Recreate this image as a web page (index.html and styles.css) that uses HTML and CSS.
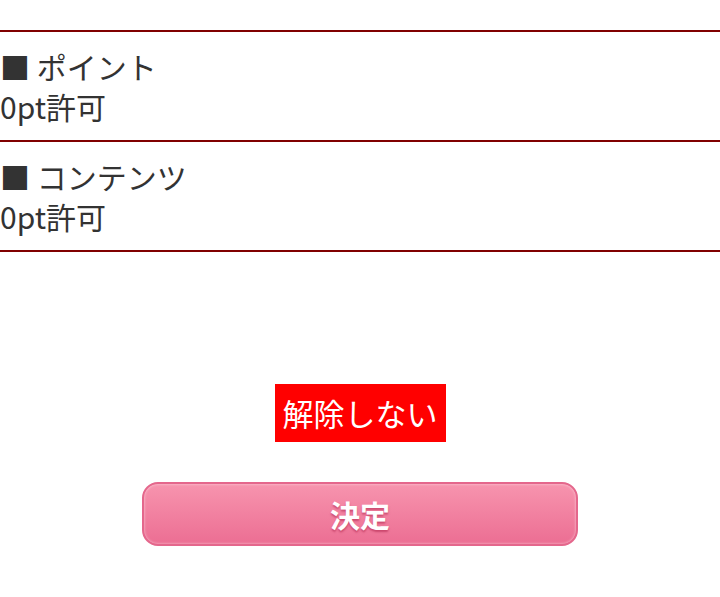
FILE: index.html
```html
<!DOCTYPE html>
<html lang="ja">
<head>
    <meta charset="UTF-8">
    <meta name="viewport" content="width=device-width, initial-scale=1.0">
    <title>設定</title>
    <link rel="stylesheet" href="styles.css">
</head>
<body>
    <div class="settings">
        <div class="setting-row">
            <div class="setting-title">■ ポイント</div>
            <div class="setting-value">0pt許可</div>
        </div>
        <div class="setting-row">
            <div class="setting-title">■ コンテンツ</div>
            <div class="setting-value">0pt許可</div>
        </div>
    </div>

    <div class="actions">
        <span class="release">解除しない</span>
        <button type="button" class="submit">決定</button>
    </div>
</body>
</html>
```

FILE: styles.css
```css
body {
    font-family: "Noto Sans CJK JP", "Noto Sans", sans-serif;
    background-color: #fff;
    margin: 0;
    padding: 0;
    color: #333;
}
.settings {
    padding-top: 30px;
}
.setting-row {
    border-top: 2px solid #800000;
    padding: 14px 0;
    font-size: 30px;
    line-height: 40px;
}
.setting-row:last-child {
    border-bottom: 2px solid #800000;
}
.actions {
    display: flex;
    flex-direction: column;
    align-items: center;
    padding-top: 132px;
}
.release {
    background-color: #ff0000;
    color: white;
    font-size: 31px;
    line-height: 58px;
    padding: 0 8px;
}
.submit {
    margin-top: 40px;
    width: 436px;
    height: 64px;
    border: 2px solid #e4678c;
    border-radius: 16px;
    background: linear-gradient(to bottom, #f794ae, #ec6e93);
    box-shadow: inset 0 0 3px rgba(255,255,255,0.6);
    color: white;
    font-family: "Noto Sans CJK JP", sans-serif;
    font-size: 30px;
    font-weight: bold;
    text-shadow: 0 2px 2px rgba(180,40,80,0.6);
    cursor: pointer;
}
```
